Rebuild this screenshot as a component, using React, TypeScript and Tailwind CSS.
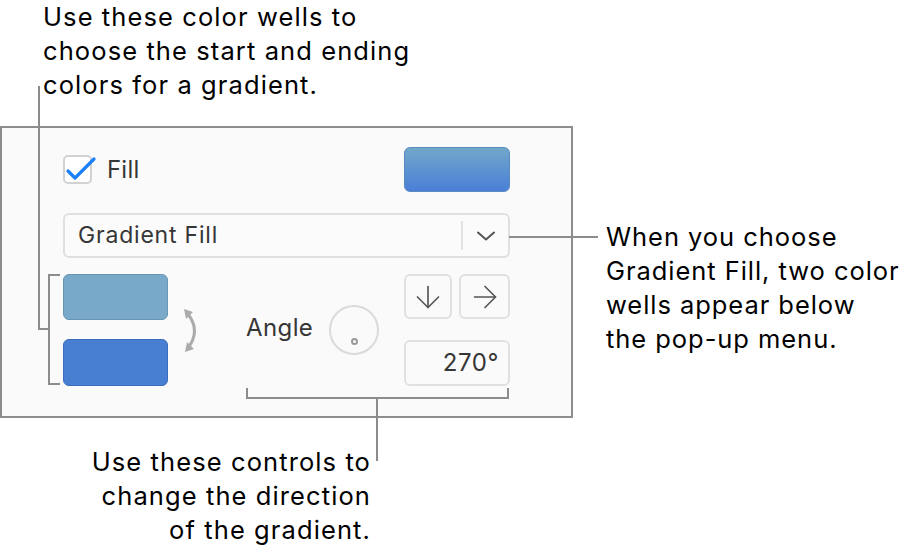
import { ArrowDown, ArrowRight } from "lucide-react"

const font = { fontFamily: "Inter, 'Noto Sans', sans-serif" }

// leader lines and brackets that tie the notes to the controls
function Leaders() {
  return (
    <svg className="pointer-events-none absolute left-0 top-0" width={902} height={554} fill="none" stroke="#8c8c8c" strokeWidth={2}>
      <path d="M39 86 V329 H49" />
      <path d="M60 275 H49 V384 H60" />
      <path d="M509 237 H598" />
      <path d="M247 388 V398 H508 V388" />
      <path d="M377 398 V461" />
    </svg>
  )
}

function SwapArrow() {
  return (
    <svg width={20} height={46} viewBox="0 0 20 46" className="shrink-0">
      <path d="M6 6 Q19 23 6 40" fill="none" stroke="#ababab" strokeWidth={3} strokeLinecap="round" />
      <path d="M2 1 L11 4 L4 11 Z" fill="#ababab" />
      <path d="M3 44 L5 34 L12 41 Z" fill="#ababab" />
    </svg>
  )
}

function Checkbox() {
  return (
    <div className="relative h-[29px] w-[29px] shrink-0 rounded-[5px] border-2 border-[#d2d2d2] bg-white">
      <svg className="absolute left-0 top-0 overflow-visible" width={29} height={29} fill="none">
        <path d="M3 14 L10 21 L29 2" stroke="#1a7ff8" strokeWidth={3.2} strokeLinecap="round" strokeLinejoin="round" />
      </svg>
    </div>
  )
}

export default function App() {
  return (
    <div className="relative h-[554px] w-[902px] overflow-hidden bg-white text-black" style={font}>
      <div className="mt-[126px] h-[292px] w-[573px] border-2 border-[#8d8d8d] bg-[#fafafa] px-[61px] pt-[19px] text-[#363636]">
        <div className="flex h-[45px] items-center justify-between">
          <div className="flex items-center gap-[15px]">
            <Checkbox />
            <span className="text-[24px] tracking-[0.2px]">Fill</span>
          </div>
          <div className="h-[45px] w-[106px] rounded-[6px] border border-[#5a8ac2] bg-gradient-to-b from-[#72a7c9] to-[#4a7fd6]" />
        </div>

        <div className="mt-[21px] flex h-[45px] items-center rounded-[6px] border-2 border-[#e0e0e0] bg-[#fbfbfb] pl-[13px]">
          <span className="text-[23px] tracking-[0.8px]">Gradient Fill</span>
          <div className="ml-auto h-[29px] w-[2px] bg-[#e2e2e2]" />
          <div className="flex w-[45px] items-center justify-center">
            <svg width={18} height={10} viewBox="0 0 18 10" fill="none">
              <path d="M1 1.5 L9 8.5 L17 1.5" stroke="#555555" strokeWidth={2} strokeLinecap="round" strokeLinejoin="round" />
            </svg>
          </div>
        </div>

        <div className="mt-[16px] flex items-center">
          <div className="flex w-[105px] flex-col gap-[19px]">
            <div className="h-[46px] rounded-[6px] border border-[#6895b4] bg-[#78a9c8]" />
            <div className="h-[47px] rounded-[6px] border border-[#3c6dbd] bg-[#487fd3]" />
          </div>
          <div className="ml-[14px] mt-[2px]">
            <SwapArrow />
          </div>
          <span className="ml-[44px] -mt-[4px] text-[24px] tracking-[0.4px]">Angle</span>
          <div className="ml-[16px] flex h-[50px] w-[50px] items-end justify-center rounded-full border-2 border-[#dadada] pb-[8px]">
            <div className="h-[7px] w-[7px] rounded-full border-2 border-[#9a9a9a]" />
          </div>
          <div className="ml-auto flex w-[106px] flex-col gap-[21px]">
            <div className="flex gap-[7px]">
              <div className="flex h-[45px] w-[48px] items-center justify-center rounded-[6px] border-2 border-[#e0e0e0]">
                <ArrowDown size={36} strokeWidth={1.1} color="#555555" />
              </div>
              <div className="flex h-[45px] w-[51px] items-center justify-center rounded-[6px] border-2 border-[#e0e0e0]">
                <ArrowRight size={36} strokeWidth={1.1} color="#555555" />
              </div>
            </div>
            <div className="flex h-[46px] items-center justify-end rounded-[6px] border-2 border-[#e0e0e0] pr-[9px] text-[24px] tracking-[0.6px]">
              270°
            </div>
          </div>
        </div>
      </div>

      <Leaders />

      <p className="absolute left-[43px] top-0 whitespace-nowrap text-[25.5px] leading-[34px] tracking-[1.1px]">
        Use these color wells to
        <br />
        choose the start and ending
        <br />
        colors for a gradient.
      </p>
      <p className="absolute left-[606px] top-[220px] whitespace-nowrap text-[25.5px] leading-[34px] tracking-[0.95px]">
        When you choose
        <br />
        Gradient Fill, two color
        <br />
        wells appear below
        <br />
        the pop-up menu.
      </p>
      <p className="absolute right-[531px] top-[445px] whitespace-nowrap text-right text-[25.5px] leading-[34px] tracking-[1.1px]">
        Use these controls to
        <br />
        change the direction
        <br />
        of the gradient.
      </p>
    </div>
  )
}
